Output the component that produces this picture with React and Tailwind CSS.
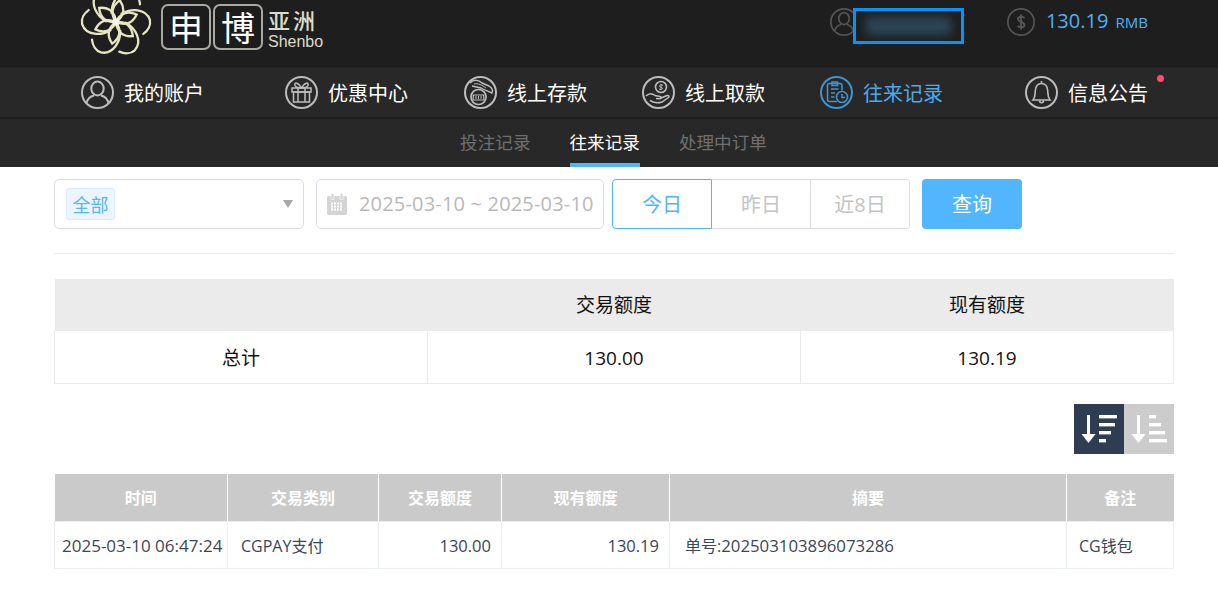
const FONT = "font-['Open_Sans','Noto_Sans_CJK_SC',sans-serif]";

function Flower() {
  const petals = [0, 60, 120, 180, 240, 300];
  return (
    <svg width="76" height="76" viewBox="-38 -38 76 76" className="shrink-0 -mt-[16px]" fill="none" stroke="#e6e6c4" strokeWidth="2.3" strokeLinecap="round">
      {petals.map((a) => (
        <g key={a} transform={`rotate(${a + 10})`}>
          <path d="M0 0 C-7 -7 -7 -15 0 -22 C7 -15 7 -7 0 0" />
          <path d="M4 -9 C12 -16 27 -19 33 -8 C35 -3 33 3 29 7" />
        </g>
      ))}
      <circle r="3.5" fill="#f5f5e8" stroke="none" />
    </svg>
  );
}

function LogoTile({ children }) {
  return (
    <div className="w-[50px] h-[46px] rounded-[7px] border-2 border-[#a9a9a2] bg-[#1c1c1c] flex items-center justify-center text-[34px] leading-none text-white font-['Noto_Sans_CJK_SC',sans-serif]">
      {children}
    </div>
  );
}

function Logo() {
  return (
    <div className="flex items-start">
      <Flower />
      <div className="flex gap-[2px] ml-[7px] mt-[4px]">
        <LogoTile>申</LogoTile>
        <LogoTile>博</LogoTile>
      </div>
      <div className="ml-[5px] mt-[6px] flex flex-col text-[#dcdcc8] font-['Liberation_Sans',sans-serif]">
        <span className="block h-[27px] text-[22px] leading-[27px] tracking-[3px] font-medium font-['Noto_Sans_CJK_SC',sans-serif]">亚洲</span>
        <span className="block h-[17px] text-[16px] leading-[17px]">Shenbo</span>
      </div>
    </div>
  );
}

function Ring({ color = '#bdbdbd', size = 33, width = 2, children }) {
  return (
    <svg width={size} height={size} viewBox="0 0 33 33" fill="none" stroke={color} strokeWidth={width} className="shrink-0">
      <circle cx="16.5" cy="16.5" r="15.5" />
      {children}
    </svg>
  );
}

const UserGlyph = () => (
  <>
    <ellipse cx="16.5" cy="12.5" rx="6.2" ry="7" />
    <path d="M5.5 27 C7 21.5 11 20 13 19.5 M27.5 27 C26 21.5 22 20 20 19.5" />
  </>
);

const icons = {
  user: <UserGlyph />,
  gift: (
    <g strokeWidth="1.5">
      <rect x="7" y="12" width="19" height="4" />
      <rect x="8.5" y="16" width="16" height="10" />
      <path d="M13 12 V26 M20 12 V26 M16.5 12 C13 6 9 6 10 9.5 C10.5 11 13 12 16.5 12 C20 12 22.5 11 23 9.5 C24 6 20 6 16.5 12" />
    </g>
  ),
  deposit: (
    <g strokeWidth="1.5">
      <path d="M6 7 C10 3 15 4 18 7 L25 10 C28 12 29 15 28 17 C24 15 20 14 17 12 L8 10" />
      <path d="M10 8 C14 7 18 9 22 12" strokeWidth="1" />
      <circle cx="14.5" cy="21" r="7.5" fill="#282828" strokeWidth="1.7" />
      <path d="M9.5 19 H19.5 L20 24 H9 Z" strokeWidth="1.2" />
      <path d="M12 20 V23 M14.5 20 V23 M17 20 V23" strokeWidth="1" />
    </g>
  ),
  withdraw: (
    <g strokeWidth="1.5">
      <circle cx="19" cy="11" r="5.5" strokeWidth="1.6" />
      <path d="M19 8 V14 M21 9.3 C19.5 8.3 17.3 9 17.5 10.4 C17.8 11.7 20.5 11 20.6 12.4 C20.6 13.6 18.2 13.9 17 13" strokeWidth="1" />
      <path d="M4 20 C7 17 10 17 13 19.5 L18 20.5 C20 21 19.5 23 17.5 22.8 L14 22.5 M18 22.5 L25 19.5 C27 19 27.5 20.5 26.5 21.5 L20 26 C16 27.5 12 27 8 24.5" />
    </g>
  ),
  records: (
    <g strokeWidth="1.6">
      <path d="M17 25.5 H9.5 C8.3 25.5 7.5 24.7 7.5 23.5 V9.5 C7.5 8.3 8.3 7.5 9.5 7.5 H20 C21.2 7.5 22 8.3 22 9.5 V14.5" />
      <path d="M12 9.5 V6 H17.5 V9.5 Z" />
      <path d="M11 13 H18.5 M11 17 H15 M11 21 H14.5" />
      <circle cx="22" cy="21" r="5.5" fill="#282828" />
      <path d="M22 18 V21.5 H25" />
    </g>
  ),
  bell: (
    <g strokeWidth="1.6">
      <path d="M8 24 C10.5 21 10 18 10.3 14.5 C10.7 10 13 7.5 16.5 7.5 C20 7.5 22.3 10 22.7 14.5 C23 18 22.5 21 25 24 Z" />
      <path d="M14.5 24.5 C14.5 27.5 18.5 27.5 18.5 24.5" />
      <path d="M16.5 5 V7.5" />
    </g>
  ),
};

const navItems = [
  { label: '我的账户', icon: 'user', w: 'w-[204px]' },
  { label: '优惠中心', icon: 'gift', w: 'w-[179px]' },
  { label: '线上存款', icon: 'deposit', w: 'w-[178px]' },
  { label: '线上取款', icon: 'withdraw', w: 'w-[178px]' },
  { label: '往来记录', icon: 'records', w: 'w-[205px]', active: true },
  { label: '信息公告', icon: 'bell', w: 'w-[150px]', dot: true },
];

function Nav() {
  return (
    <nav className="h-[52px] bg-[#282828] border-t border-[#222] border-b-2 border-b-[#1c1c1c] flex items-center pl-[81px]">
      {navItems.map((item) => (
        <div key={item.label} className={`${item.w} relative flex items-center gap-[10px] text-[20px] ${item.active ? 'text-[#4ea8ec]' : 'text-white'}`}>
          <Ring color={item.active ? '#3f93cf' : '#bdbdbd'}>{icons[item.icon]}</Ring>
          <span className="leading-[33px] pt-[1px]">{item.label}</span>
          {item.dot && <span className="absolute left-[132px] top-[-1px] w-[7px] h-[7px] rounded-full bg-[#ff4d6d]" />}
        </div>
      ))}
    </nav>
  );
}

function SubNav() {
  return (
    <div className="h-[48px] bg-[#282828] flex justify-center gap-[39px] pl-[9px] text-[17.6px]">
      <span className="text-[#6f6f6f] leading-[46px]">投注记录</span>
      <span className="text-white leading-[46px] border-b-[4px] border-[#4fb5ff]">往来记录</span>
      <span className="text-[#6f6f6f] leading-[46px]">处理中订单</span>
    </div>
  );
}

function TopBar() {
  return (
    <header className="h-[67px] bg-[#1e1e1e] overflow-hidden flex items-start pl-[78px]">
      <Logo />
      <div className="ml-auto mt-[6px] flex items-center relative">
        <Ring color="#555" size={28}>
          <UserGlyph />
        </Ring>
        <div className="absolute left-[23px] top-[2px] w-[111px] h-[36px] border-[3px] border-[#0095ff] bg-[#1e1e1e] overflow-hidden">
          <div className="mx-[10px] my-[6px] h-[18px] bg-[#2b4656] blur-[5px]" />
        </div>
        <div className="w-[149px]" />
        <Ring color="#555" size={28}>
          <path d="M20.5 12 C19 9.5 13 9.5 13 13 C13 17 20.5 15.5 20.5 20 C20.5 23.5 14 23.5 12.5 21 M16.5 7.5 V25.5" strokeWidth="2.2" />
        </Ring>
        <span className="ml-[11px] mr-[70px] text-[#4fb0f7] text-[20px] leading-[30px] whitespace-nowrap">
          130.19 <span className="text-[15px] ml-[2px]">RMB</span>
        </span>
      </div>
    </header>
  );
}

function Filters() {
  return (
    <div className="flex h-[50px]">
      <div className="w-[250px] border border-[#dcdfe6] rounded-[5px] flex items-center pl-[11px] pr-[10px] justify-between">
        <span className="w-[49px] h-[32px] bg-[#ecf5ff] border border-[#d9ecff] rounded-[3px] flex items-center justify-center pt-[2px] text-[18px] text-[#56b4f9]">全部</span>
        <span className="w-0 h-0 border-x-[5px] border-x-transparent border-t-[8px] border-t-[#a8a8a8]" />
      </div>
      <div className="w-[288px] ml-[12px] border border-[#dcdfe6] rounded-[5px] flex items-center pl-[10px] text-[#b9b9b9] text-[20px] tracking-[0.18px] whitespace-nowrap">
        <svg width="20" height="22" viewBox="0 0 20 22" className="shrink-0 mr-[12px]">
          <rect x="0" y="3" width="20" height="19" rx="2" fill="#d4d4d4" />
          <rect x="4" y="0.5" width="3" height="6" rx="1" fill="#d4d4d4" stroke="#fff" strokeWidth="0.7" />
          <rect x="13" y="0.5" width="3" height="6" rx="1" fill="#d4d4d4" stroke="#fff" strokeWidth="0.7" />
          {[9.5, 12.5, 15.5].map((y) =>
            [4, 7, 10, 13].map((x) => <rect key={`${x}-${y}`} x={x} y={y} width="2" height="2" fill="#fff" />)
          )}
        </svg>
        <span>2025-03-10 ~ 2025-03-10</span>
      </div>
      <div className="ml-[8px] flex text-[20px]">
        <span className="w-[100px] border border-[#4fb5ff] rounded-l-[4px] pt-[1px] text-[#4fb5ff] flex items-center justify-center">今日</span>
        <span className="w-[99px] border-y border-r border-[#dcdfe6] pt-[1px] text-[#c4c4c4] flex items-center justify-center">昨日</span>
        <span className="w-[99px] border-y border-r border-[#dcdfe6] rounded-r-[4px] pt-[1px] text-[#c4c4c4] flex items-center justify-center">近8日</span>
      </div>
      <button className="ml-[12px] w-[100px] bg-[#52b6ff] rounded-[4px] pt-[1px] text-white text-[20px]">查询</button>
    </div>
  );
}

function Summary() {
  return (
    <table className="w-full table-fixed border-collapse text-[19px] text-[#111]">
      <tbody>
        <tr className="h-[51px] bg-[#ebebeb] text-center">
          <td className="w-[373px]" />
          <td className="w-[373px] pt-[2px]">交易额度</td>
          <td className="pt-[2px]">现有额度</td>
        </tr>
        <tr className="h-[53px] text-center">
          <td className="border border-[#ebebeb] pt-[3px]">总计</td>
          <td className="border border-[#ebebeb] pt-[3px]">130.00</td>
          <td className="border border-[#ebebeb] pt-[3px]">130.19</td>
        </tr>
      </tbody>
    </table>
  );
}

function SortIcon({ bars }) {
  return (
    <svg width="36" height="32" viewBox="0 0 36 32" fill="#fff">
      <rect x="6" y="2" width="3" height="23" />
      <path d="M0.5 21 H14.5 L7.5 30 Z" />
      {bars.map((b, i) => (
        <rect key={i} x={18} y={2 + i * 8} width={b} height="3.4" />
      ))}
    </svg>
  );
}

function SortButtons() {
  return (
    <div className="flex justify-end mt-[20px]">
      <div className="w-[50px] h-[50px] bg-[#2e3d52] flex items-center justify-center">
        <SortIcon bars={[20, 16, 12, 7]} />
      </div>
      <div className="w-[50px] h-[50px] bg-[#cccccc] flex items-center justify-center">
        <SortIcon bars={[7, 12, 16, 20]} />
      </div>
    </div>
  );
}

const colWidths = ['w-[173px]', 'w-[151px]', 'w-[123px]', 'w-[168px]', 'w-[397px]', ''];
const headers = ['时间', '交易类别', '交易额度', '现有额度', '摘要', '备注'];

function Records() {
  const cell = 'border border-[#ebeef5] whitespace-nowrap pt-[2px]';
  return (
    <table className="w-full table-fixed border-collapse mt-[20px] text-[16px] text-[#3c4656]">
      <thead>
        <tr className="h-[48px] bg-[#cacaca] text-white">
          {headers.map((h, i) => (
            <th key={h} className={`${colWidths[i]} ${i < 5 ? 'border-r border-white' : ''} pt-[2px] font-bold text-[16px]`}>{h}</th>
          ))}
        </tr>
      </thead>
      <tbody>
        <tr className="h-[47px]">
          <td className={`${cell} pl-[7px] text-[17px]`}>2025-03-10 06:47:24</td>
          <td className={`${cell} pl-[13px]`}>CGPAY支付</td>
          <td className={`${cell} text-right pr-[10px] text-[16.5px]`}>130.00</td>
          <td className={`${cell} text-right pr-[10px] text-[16.5px]`}>130.19</td>
          <td className={`${cell} pl-[15px]`}>单号:<span className="text-[16.8px]">202503103896073286</span></td>
          <td className={`${cell} pl-[12px]`}>CG钱包</td>
        </tr>
      </tbody>
    </table>
  );
}

export default function App() {
  return (
    <div className={`w-[1218px] h-[599px] overflow-hidden bg-white ${FONT}`}>
      <TopBar />
      <Nav />
      <SubNav />
      <main className="w-[1218px] pl-[54px] pr-[44px] pt-[12px]">
        <Filters />
        <div className="h-px bg-[#ebebeb] mt-[24px] mb-[25px]" />
        <Summary />
        <SortButtons />
        <Records />
      </main>
    </div>
  );
}
